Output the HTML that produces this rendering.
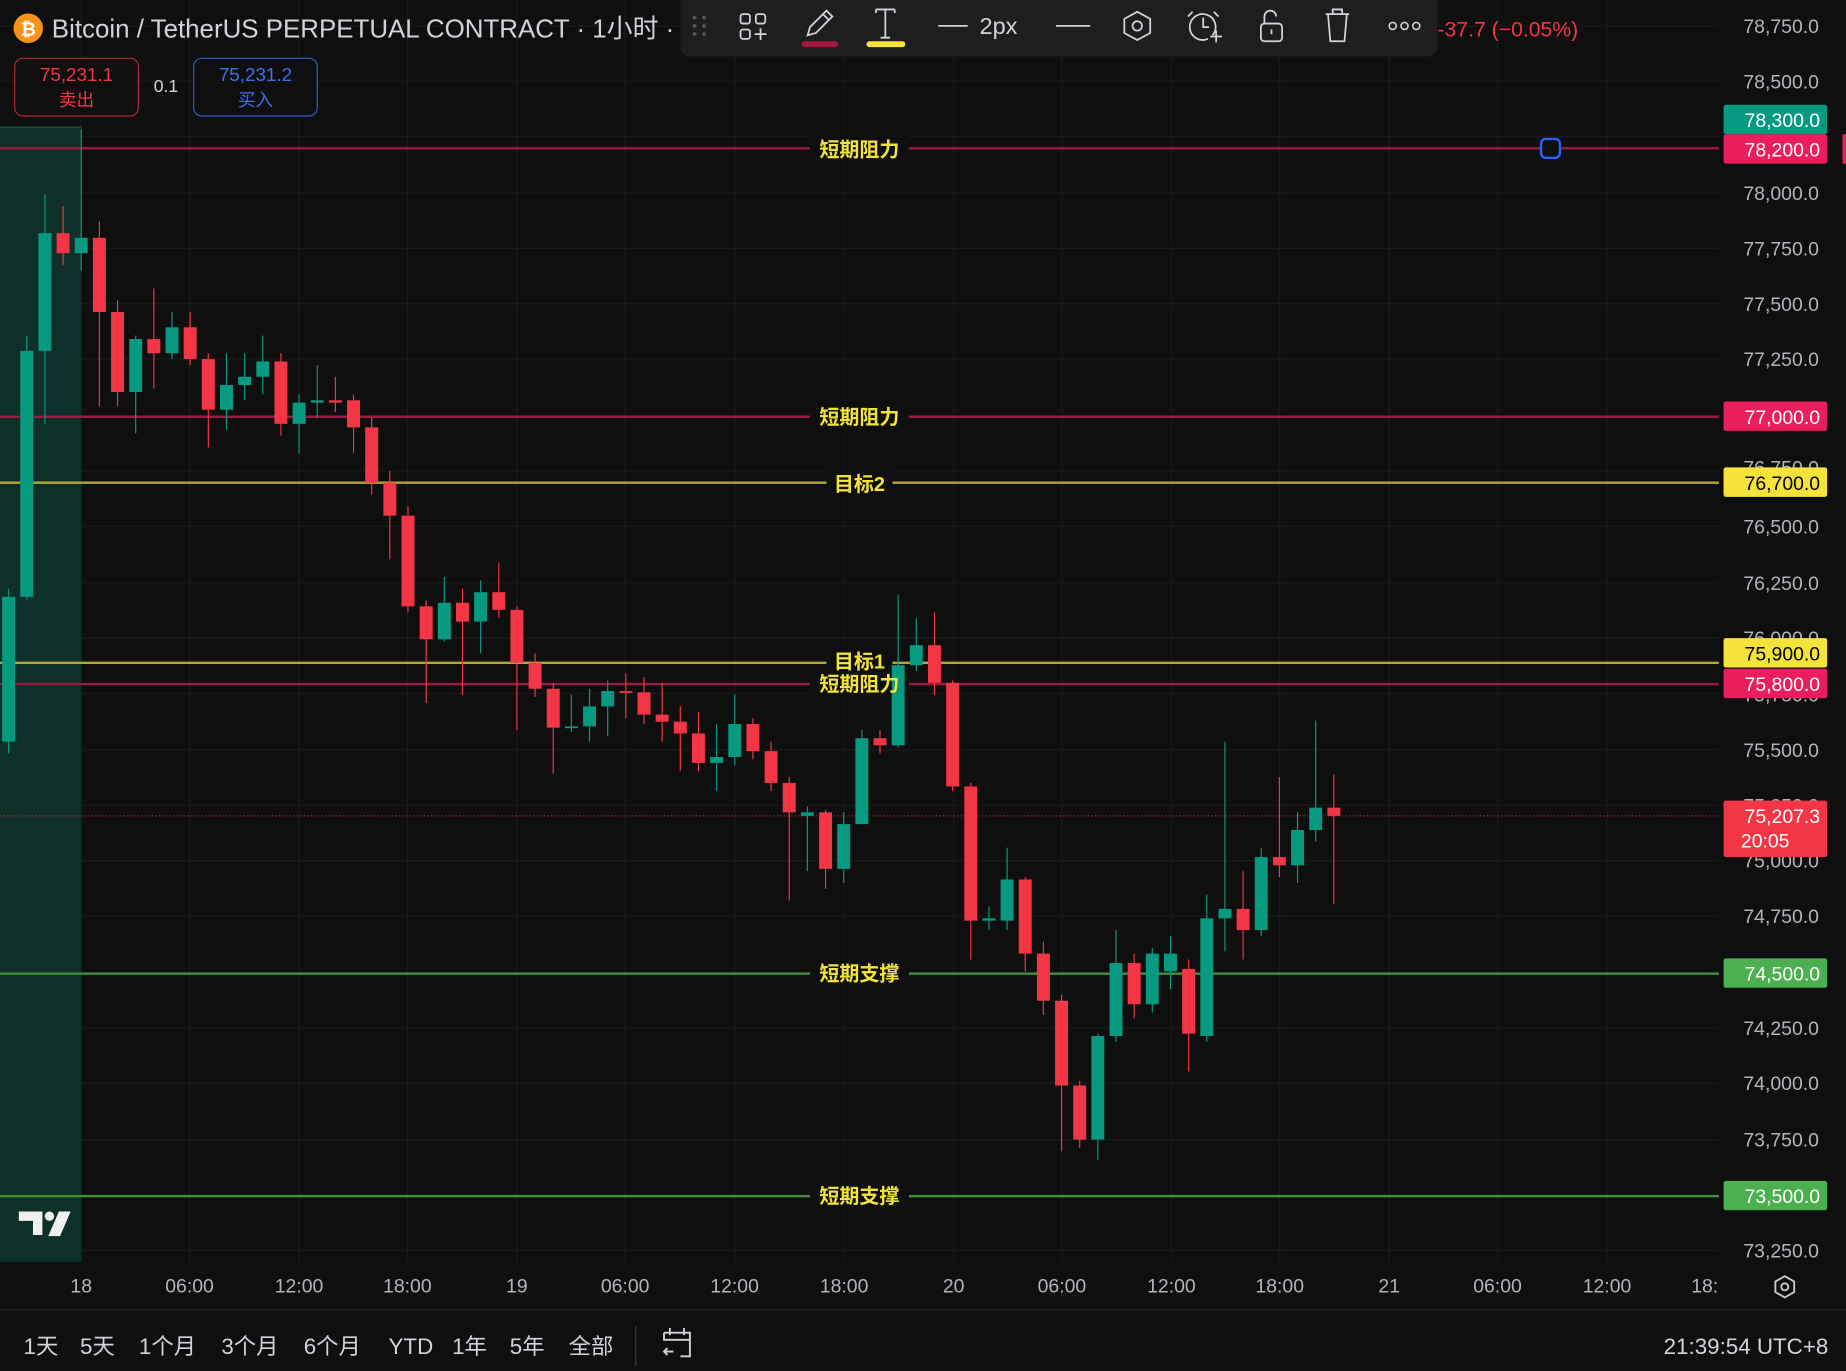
<!DOCTYPE html>
<html><head><meta charset="utf-8"><style>
html,body{margin:0;padding:0;background:#0f0f0f;overflow:hidden}
svg{display:block}
text{font-family:"Liberation Sans","Noto Sans CJK SC",sans-serif}
</style></head><body>
<svg id="s" width="1846" height="1371" viewBox="0 0 1568 1164.5" xmlns="http://www.w3.org/2000/svg">
<rect width="1568" height="1165" fill="#0f0f0f"/>
<!-- grid -->
<g stroke="#1b1b1b" stroke-width="1">
<line x1="0" x2="1460" y1="22" y2="22"/><line x1="0" x2="1460" y1="69" y2="69"/><line x1="0" x2="1460" y1="116" y2="116"/><line x1="0" x2="1460" y1="164" y2="164"/><line x1="0" x2="1460" y1="211" y2="211"/><line x1="0" x2="1460" y1="258" y2="258"/><line x1="0" x2="1460" y1="305" y2="305"/><line x1="0" x2="1460" y1="353" y2="353"/><line x1="0" x2="1460" y1="400" y2="400"/><line x1="0" x2="1460" y1="447" y2="447"/><line x1="0" x2="1460" y1="495" y2="495"/><line x1="0" x2="1460" y1="542" y2="542"/><line x1="0" x2="1460" y1="589" y2="589"/><line x1="0" x2="1460" y1="637" y2="637"/><line x1="0" x2="1460" y1="684" y2="684"/><line x1="0" x2="1460" y1="731" y2="731"/><line x1="0" x2="1460" y1="778" y2="778"/><line x1="0" x2="1460" y1="826" y2="826"/><line x1="0" x2="1460" y1="873" y2="873"/><line x1="0" x2="1460" y1="920" y2="920"/><line x1="0" x2="1460" y1="968" y2="968"/><line x1="0" x2="1460" y1="1015" y2="1015"/><line x1="0" x2="1460" y1="1062" y2="1062"/>
<line y1="0" y2="1072" x1="69" x2="69"/><line y1="0" y2="1072" x1="161" x2="161"/><line y1="0" y2="1072" x1="254" x2="254"/><line y1="0" y2="1072" x1="346" x2="346"/><line y1="0" y2="1072" x1="439" x2="439"/><line y1="0" y2="1072" x1="531" x2="531"/><line y1="0" y2="1072" x1="624" x2="624"/><line y1="0" y2="1072" x1="717" x2="717"/><line y1="0" y2="1072" x1="810" x2="810"/><line y1="0" y2="1072" x1="902" x2="902"/><line y1="0" y2="1072" x1="995" x2="995"/><line y1="0" y2="1072" x1="1087" x2="1087"/><line y1="0" y2="1072" x1="1180" x2="1180"/><line y1="0" y2="1072" x1="1272" x2="1272"/><line y1="0" y2="1072" x1="1365" x2="1365"/>
</g>
<rect x="0" y="108" width="69" height="964" fill="#0e3029"/>
<line x1="0" y1="108" x2="69" y2="108" stroke="#1c5a4d"/>
<!-- horizontal lines -->
<g stroke-width="2">
<line x1="0" x2="1460" y1="126" y2="126" stroke="#9c1a44"/>
<line x1="0" x2="1460" y1="354" y2="354" stroke="#9c1a44"/>
<line x1="0" x2="1460" y1="410" y2="410" stroke="#b5a830"/>
<line x1="0" x2="1460" y1="563" y2="563" stroke="#b5a830"/>
<line x1="0" x2="1460" y1="581" y2="581" stroke="#9c1a44"/>
<line x1="0" x2="1460" y1="827" y2="827" stroke="#3f8f3c"/>
<line x1="0" x2="1460" y1="1016" y2="1016" stroke="#3f8f3c"/>
</g>
<line x1="0" x2="1460" y1="693" y2="693" stroke="#f23645" stroke-width="1" stroke-dasharray="1,2" opacity=".7"/>
<rect x="1309" y="118" width="16" height="16" rx="4" fill="#0f0f0f" stroke="#2962ff" stroke-width="2"/>
<!-- label bgs -->
<g fill="#0f0f0f">
<rect x="688" y="114" width="84" height="24"/><rect x="688" y="342" width="84" height="24"/><rect x="702" y="398" width="56" height="24"/>
<rect x="702" y="551" width="56" height="22"/><rect x="688" y="570" width="84" height="22"/><rect x="688" y="815" width="84" height="24"/><rect x="688" y="1004" width="84" height="24"/>
</g>
<g id="candles"></g>
<g fill="#f2e33a" font-size="17" font-weight="bold" text-anchor="middle">
<text x="730" y="133">短期阻力</text><text x="730" y="360">短期阻力</text><text x="730" y="417">目标2</text>
<text x="730" y="568">目标1</text><text x="730" y="587">短期阻力</text><text x="730" y="833">短期支撑</text><text x="730" y="1022">短期支撑</text>
</g>
<!-- price axis -->
<g fill="#b2b5be" font-size="16.5" text-anchor="end">
<text x="1545" y="28">78,750.0</text><text x="1545" y="75">78,500.0</text><text x="1545" y="170">78,000.0</text><text x="1545" y="217">77,750.0</text><text x="1545" y="264">77,500.0</text><text x="1545" y="311">77,250.0</text><text x="1545" y="403">76,750.0</text><text x="1545" y="453">76,500.0</text><text x="1545" y="501">76,250.0</text><text x="1545" y="548">76,000.0</text><text x="1545" y="596">75,750.0</text><text x="1545" y="643">75,500.0</text><text x="1545" y="690">75,250.0</text><text x="1545" y="737">75,000.0</text><text x="1545" y="784">74,750.0</text><text x="1545" y="879">74,250.0</text><text x="1545" y="926">74,000.0</text><text x="1545" y="974">73,750.0</text><text x="1545" y="1068">73,250.0</text>
</g>
<g font-size="16.5" text-anchor="end">
<rect x="1464" y="89" width="88" height="25" fill="#089981" rx="2"/><text x="1546" y="108" fill="#fff">78,300.0</text>
<rect x="1464" y="114" width="88" height="25" fill="#e91e5a" rx="2"/><text x="1546" y="133" fill="#fff">78,200.0</text>
<rect x="1464" y="341" width="88" height="25" fill="#e91e5a" rx="2"/><text x="1546" y="360" fill="#fff">77,000.0</text>
<rect x="1464" y="397" width="88" height="25" fill="#f5e23a" rx="2"/><text x="1546" y="416" fill="#000">76,700.0</text>
<rect x="1464" y="542" width="88" height="25" fill="#f5e23a" rx="2"/><text x="1546" y="561" fill="#000">75,900.0</text>
<rect x="1464" y="568" width="88" height="25" fill="#e91e5a" rx="2"/><text x="1546" y="587" fill="#fff">75,800.0</text>
<rect x="1464" y="680" width="88" height="48" fill="#f23645" rx="2"/><text x="1546" y="699" fill="#fff">75,207.3</text><text x="1520" y="720" fill="#fff">20:05</text>
<rect x="1464" y="814" width="88" height="25" fill="#4caf50" rx="2"/><text x="1546" y="833" fill="#fff">74,500.0</text>
<rect x="1464" y="1003" width="88" height="25" fill="#4caf50" rx="2"/><text x="1546" y="1022" fill="#fff">73,500.0</text>
</g>
<rect x="1565" y="114" width="3" height="25" fill="#e91e5a"/>
<!-- time axis -->
<g fill="#b2b5be" font-size="16.5" text-anchor="middle">
<text x="69" y="1098">18</text><text x="161" y="1098">06:00</text><text x="254" y="1098">12:00</text><text x="346" y="1098">18:00</text><text x="439" y="1098">19</text><text x="531" y="1098">06:00</text><text x="624" y="1098">12:00</text><text x="717" y="1098">18:00</text><text x="810" y="1098">20</text><text x="902" y="1098">06:00</text><text x="995" y="1098">12:00</text><text x="1087" y="1098">18:00</text><text x="1180" y="1098">21</text><text x="1272" y="1098">06:00</text><text x="1365" y="1098">12:00</text><text x="1448" y="1098">18:</text>
</g>
<path d="M1516 1084l8 4.5v9l-8 4.5l-8-4.5v-9z" fill="none" stroke="#c8c8c8" stroke-width="1.6"/><circle cx="1516" cy="1093" r="3" fill="none" stroke="#c8c8c8" stroke-width="1.6"/>
<line x1="0" x2="1568" y1="1112.5" y2="1112.5" stroke="#2a2a2a"/>
<g fill="#d1d4dc" font-size="19">
<text x="20" y="1150">1天</text><text x="68" y="1150">5天</text><text x="118" y="1150">1个月</text><text x="188" y="1150">3个月</text><text x="258" y="1150">6个月</text><text x="330" y="1150">YTD</text><text x="384" y="1150">1年</text><text x="433" y="1150">5年</text><text x="483" y="1150">全部</text>
<text x="1553" y="1150" text-anchor="end">21:39:54 UTC+8</text>
</g>
<line x1="540" x2="540" y1="1126" y2="1160" stroke="#3a3a3a"/>
<g fill="none" stroke="#d1d4dc" stroke-width="1.6"><path d="M564 1132h22v20h-8M564 1132v6h22M569 1128v6M581 1128v6M572 1148h-8m3-3l-3 3l3 3"/></g>
<!-- TV logo -->
<g fill="#f0f0f0"><path d="M16 1029h20v20h-8v-12h-12z"/><circle cx="42" cy="1033" r="4"/><path d="M50 1029h10l-9 21h-10z"/></g>
<!-- header -->
<circle cx="24" cy="24" r="12.5" fill="#f7931a"/><text x="24" y="30" fill="#fff" font-size="16" font-weight="bold" text-anchor="middle">₿</text>
<text x="44" y="32" fill="#d1d4dc" font-size="22">Bitcoin / TetherUS PERPETUAL CONTRACT · 1小时 ·</text>
<rect x="12.5" y="49.5" width="105" height="49" rx="7" fill="#0f0f0f" stroke="#b3283a"/>
<text x="65" y="69" fill="#f23645" font-size="16" text-anchor="middle">75,231.1</text><text x="65" y="90" fill="#f23645" font-size="15" text-anchor="middle">卖出</text>
<text x="141" y="78" fill="#d1d4dc" font-size="15" text-anchor="middle">0.1</text>
<rect x="164.5" y="49.5" width="105" height="49" rx="7" fill="#0f0f0f" stroke="#2e5ed8"/>
<text x="217" y="69" fill="#3d6ef5" font-size="16" text-anchor="middle">75,231.2</text><text x="217" y="90" fill="#3d6ef5" font-size="15" text-anchor="middle">买入</text>
<!-- toolbar -->
<rect x="578" y="-10" width="643" height="58" rx="8" fill="#1e1e1e"/>
<g fill="#555"><circle cx="590" cy="15" r="1.6"/><circle cx="598" cy="15" r="1.6"/><circle cx="590" cy="22" r="1.6"/><circle cx="598" cy="22" r="1.6"/><circle cx="590" cy="29" r="1.6"/><circle cx="598" cy="29" r="1.6"/></g>
<g fill="none" stroke="#d1d4dc" stroke-width="1.5">
<rect x="629" y="12" width="8" height="8" rx="2"/><rect x="642" y="12" width="8" height="8" rx="2"/><rect x="629" y="25" width="8" height="8" rx="2"/><path d="M646 24v10M641 29h10"/>
<path d="M686 30l2-7l14-14l5 5l-14 14z M699 12l5 5"/>
<path d="M744 8h16M752 8v24M748 32h8M744 8v3M760 8v3"/>
<path d="M797 22h25M897 22h29"/>
<path d="M966 10l11 6v12l-11 6l-11-6v-12z"/><circle cx="966" cy="22" r="4"/>
<path d="M1030 30a11 11 0 1 0 -4 3M1022 15v8h5M1013 10l-4 4M1031 10l4 4M1033 26v10M1028 31h10"/>
<rect x="1071" y="20" width="18" height="15" rx="3"/><path d="M1074 20v-6a5 5 0 0 1 10 0M1080 25v4"/>
<path d="M1126 12h20M1132 12v-4h8v4M1128 12l2 23h12l2-23"/>
</g>
<rect x="681" y="35" width="31" height="5" rx="2.5" fill="#a3173f"/>
<rect x="736" y="35" width="33" height="5" rx="2.5" fill="#f5e23a"/>
<text x="832" y="29" fill="#d1d4dc" font-size="20">2px</text>
<g fill="none" stroke="#d1d4dc" stroke-width="1.3"><circle cx="1183" cy="22" r="3"/><circle cx="1193" cy="22" r="3"/><circle cx="1203" cy="22" r="3"/></g>
<text x="1221" y="31" fill="#f23645" font-size="18">-37.7 (−0.05%)</text>
</svg>
<script>
var d=[[507,630,500,640,1],[298,507,285,510,1],[198,298,165,360,1],[198,215,175,225,0],[202,215,110,230,1],[202,265,188,345,0],[265,333,255,345,0],[288,333,285,368,1],[288,300,245,330,0],[278,300,265,305,1],[278,305,265,310,0],[305,348,300,380,0],[327,348,300,365,1],[320,327,300,340,1],[307,320,285,335,1],[307,360,300,370,0],[342,360,335,385,1],[340,342,310,355,1],[340,342,320,350,0],[340,363,335,385,0],[363,410,355,420,0],[410,438,400,475,0],[438,515,430,520,0],[515,543,510,597,0],[512,543,490,545,1],[512,528,500,590,0],[503,528,493,555,1],[503,518,478,525,0],[518,563,515,620,0],[563,585,555,592,0],[585,618,580,657,0],[617,618,590,622,1],[600,617,585,630,1],[587,600,578,625,1],[587,588,572,610,0],[588,607,575,615,0],[607,613,580,630,0],[613,623,600,655,0],[623,648,605,655,0],[643,648,615,672,1],[615,643,590,650,1],[615,638,610,645,0],[638,665,630,672,0],[665,690,660,765,0],[690,693,685,740,1],[690,738,688,755,0],[700,738,690,750,1],[627,700,620,700,1],[627,633,620,640,0],[565,633,505,635,1],[548,565,525,570,1],[548,580,520,590,0],[580,668,578,672,0],[668,782,665,815,0],[780,782,770,790,1],[747,782,720,790,1],[747,810,745,825,0],[810,850,800,862,0],[850,922,845,978,0],[922,968,918,975,0],[880,968,878,985,1],[818,880,790,885,1],[818,853,810,865,0],[810,853,805,860,1],[810,825,795,840,1],[823,878,815,910,0],[780,880,760,885,1],[772,780,630,808,1],[772,790,740,815,0],[728,790,720,795,1],[728,735,660,745,0],[705,735,690,750,1],[686,705,612,715,1],[686,693,658,768,0]];
var g=document.getElementById('candles'),h='';
for(var i=0;i<d.length;i++){var c=d[i],x=69+(i-4)*15.42,col=c[4]?'#089981':'#f23645',t=Math.min(c[0],c[1]),b=Math.max(c[0],c[1]);if(b-t<1.5)b=t+1.5;
h+='<line x1="'+x+'" x2="'+x+'" y1="'+c[2]+'" y2="'+c[3]+'" stroke="'+col+'" stroke-width="1"/><rect x="'+(x-5.5)+'" y="'+t+'" width="11" height="'+(b-t)+'" fill="'+col+'"/>';}
g.innerHTML=h;
</script>
</body></html>
